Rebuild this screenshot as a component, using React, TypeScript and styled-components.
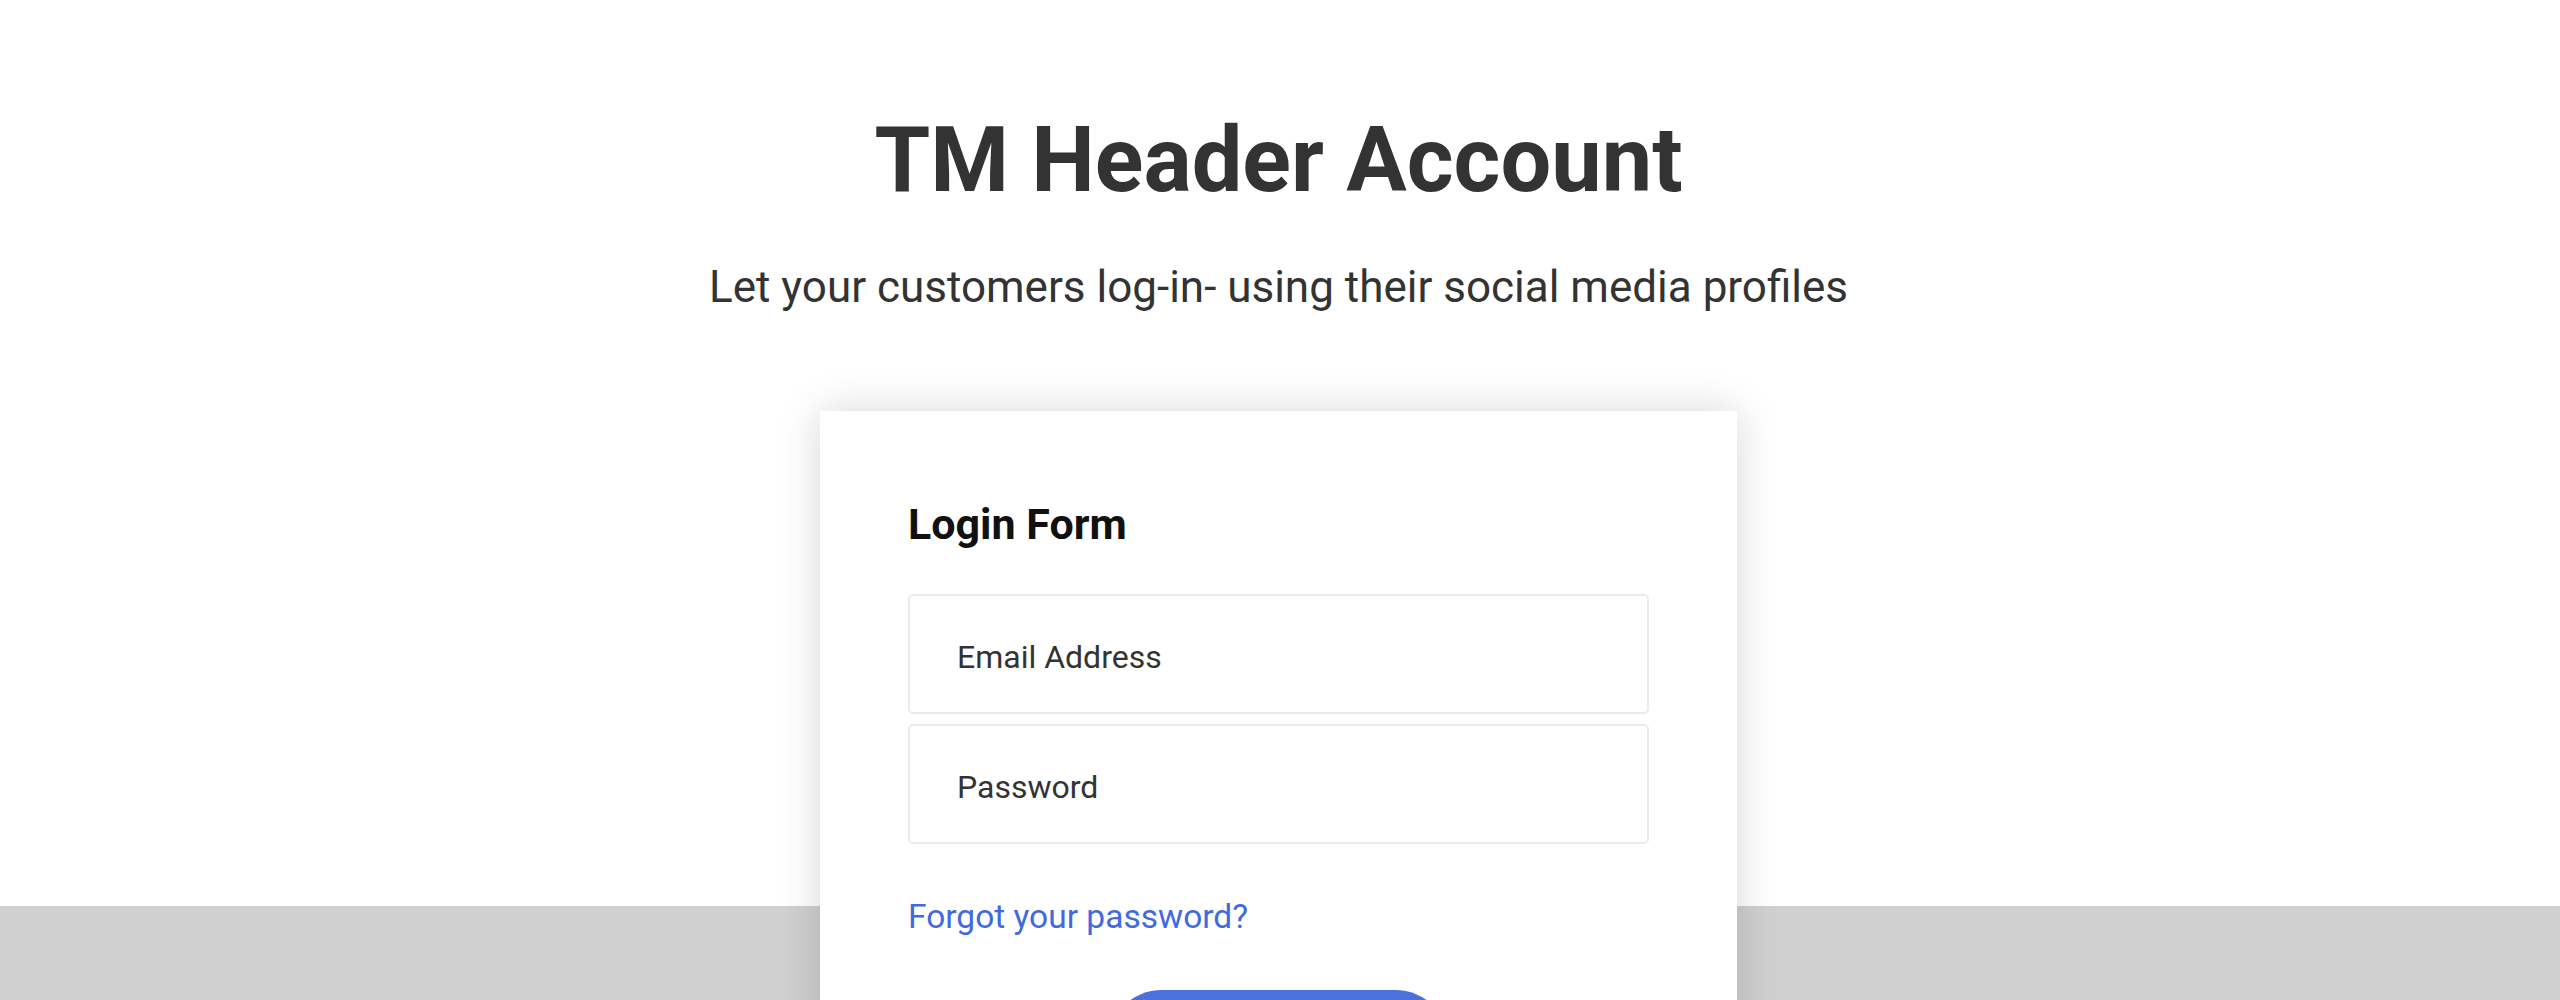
import React from "react";
import styled, { createGlobalStyle } from "styled-components";

const GlobalStyle = createGlobalStyle`
  html, body {
    margin: 0;
    padding: 0;
  }

  body {
    font-family: Roboto, "Liberation Sans", sans-serif;
    color: #333;
    background: #fff;
  }

  * {
    box-sizing: border-box;
  }
`;

const Page = styled.div`
  min-height: 1000px;
  display: flex;
  flex-direction: column;
  align-items: center;
  padding: 107px 3px 0 0;
  background: linear-gradient(to bottom, #ffffff 906px, #d0d0d0 906px);
`;

const Title = styled.h1`
  margin: 0;
  font-size: 90px;
  line-height: 1.2;
  font-weight: 700;
  color: #333;
`;

const Subtitle = styled.p`
  margin: 46px 0 0;
  font-size: 44px;
  line-height: 1.2;
  font-weight: 400;
  color: #333;
`;

const Card = styled.form`
  width: 917px;
  margin-top: 97px;
  padding: 88px 88px 60px;
  background: #fff;
  box-shadow: 0 0 40px rgba(0, 0, 0, 0.16);
  display: flex;
  flex-direction: column;
`;

const CardTitle = styled.h2`
  margin: 0 0 44px;
  font-size: 43px;
  line-height: 1.2;
  font-weight: 700;
  color: #111;
`;

const Fields = styled.div`
  display: flex;
  flex-direction: column;
  gap: 10px;
`;

const Input = styled.input`
  height: 120px;
  width: 100%;
  padding: 6px 47px 0;
  border: 2px solid #ebebeb;
  border-radius: 5px;
  font-family: Roboto, "Liberation Sans", sans-serif;
  font-size: 32px;
  color: #333;
  outline: none;

  &::placeholder {
    color: #333;
  }
`;

const ForgotLink = styled.a`
  margin-top: 53px;
  font-size: 33.5px;
  line-height: 1.2;
  color: #4169e1;
  text-decoration: none;
  align-self: flex-start;
`;

const SubmitButton = styled.button`
  align-self: center;
  margin-top: 52px;
  width: 343px;
  height: 110px;
  border: none;
  border-radius: 55px;
  background: #4a72dd;
  color: #fff;
  font-family: Roboto, "Liberation Sans", sans-serif;
  font-size: 32px;
  font-weight: 500;
  cursor: pointer;
`;

export default function App() {
  return (
    <>
      <GlobalStyle />
      <Page>
        <Title>TM Header Account</Title>
        <Subtitle>Let your customers log-in- using their social media profiles</Subtitle>
        <Card onSubmit={(e) => e.preventDefault()}>
          <CardTitle>Login Form</CardTitle>
          <Fields>
            <Input type="email" placeholder="Email Address" />
            <Input type="password" placeholder="Password" />
          </Fields>
          <ForgotLink href="#">Forgot your password?</ForgotLink>
          <SubmitButton type="submit">Login</SubmitButton>
        </Card>
      </Page>
    </>
  );
}
